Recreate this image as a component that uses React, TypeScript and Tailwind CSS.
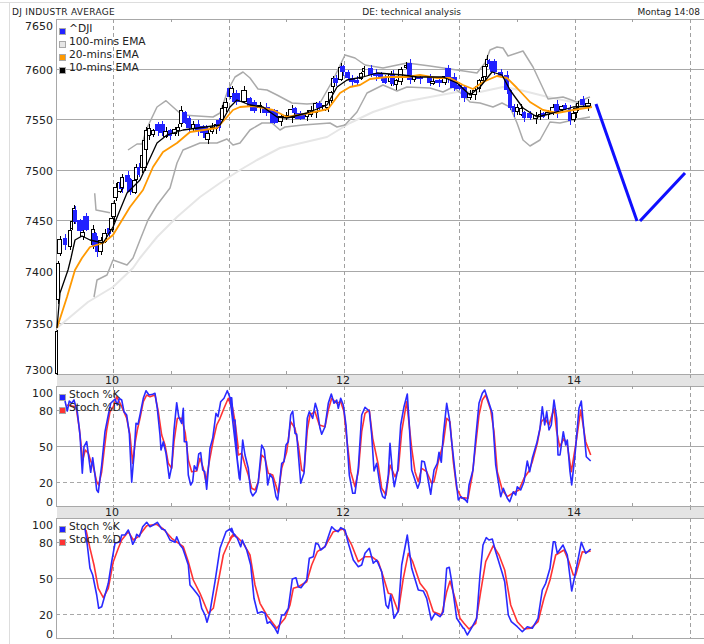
import React from 'react';

// traced from the chart at 3x, so every polyline carries its crop origin
const tr = (ox: number, oy: number, pts: string) =>
  pts
    .trim()
    .split(/\s+/)
    .map((p) => {
      const [x, y] = p.split(',').map(Number);
      return `${(ox + x / 3).toFixed(1)},${(oy + y / 3).toFixed(1)}`;
    })
    .join(' ');

const FONT = "'DejaVu Sans', 'Liberation Sans', sans-serif";

const MAJOR_X = [113.5, 229.5, 344.5, 459.5, 575.5, 690.5];
const MINOR_X = [171.5, 286.5, 402.5, 517.5, 632.5];

const upperBand =
  '94.7,193.3 96,210 110,212.7';
const upperBand2 =
  '128,150 137,144 142,144 147,128 157,107 166,100.7 173,107 182,115 213,117 220,113 228,90 235,77 243,72 250,78 258,89 267,90 277,95 292,103 307,104 320,103 333,80 345,55 355,58 365,65 383,68 407,63 430,66 457,70 477,73 485,63 490,50 497,47 503,48 508,56 523,51 533,67 548,99 563,97 577,102 590,97';
const lowerBand =
  '94,297 97,280 107,275 113,260 127,265 133,258 140,240 148,220 157,205 170,188 177,163 183,150 200,143 217,143 227,139 233,145 240,143 250,130 262,123 272,123 280,130 285,127 303,125 330,123 337,127 345,125 357,112 367,93 383,85 397,91 407,87 430,88 443,92 453,87 463,95 470,102 480,103 493,107 502,103 510,107 517,123 523,140 530,146 540,140 550,122 560,123 573,120 590,117';
const ema100 =
  '57,328 88,302 113,287 133,268 140,258 157,237 177,217 200,197 220,183 240,170 257,160 280,148 327,137 350,123 373,112 403,102 430,97 457,92 480,92 503,87 520,90 548,97 577,103 592,106';
const ema20 =
  '57,328 67,297 75,270 82,258 90,247 103,243 113,235 130,207 143,190 153,167 163,152 177,143 190,132 217,128 227,117 233,110 240,107 253,106 273,110 287,117 310,113 328,109 340,93 350,87 360,85 370,79 387,77 407,77 420,75 437,78 450,78 463,85 473,89 483,82 497,76 507,78 517,88 530,102 543,110 557,113 573,110 592,107';
const ema10 =
  '57,328 60,293 68,270 71,258 75,240 82,236 90,240 103,243 113,227 127,193 140,180 157,143 167,135 183,130 220,125 230,107 237,100 250,105 263,107 277,117 287,118 307,113 327,105 337,87 347,80 363,77 377,73 403,75 417,77 443,77 457,83 470,95 480,87 492,72 502,75 510,90 523,108 537,117 553,113 573,107 590,106';

// x1, x2, top, bottom, blue?
const candles: [number, number, number, number, number][] = [
  [55, 58, 331, 374, 0], [56, 60, 263, 300, 0], [57, 62, 239, 254, 0], [63, 67, 238, 245, 1],
  [68, 72, 230, 247, 0], [70, 73, 221, 229, 0], [72, 76, 208, 220, 0], [73, 77, 210, 222, 1],
  [77, 83, 220, 231, 1], [80, 85, 232, 237, 0], [83, 89, 216, 230, 1], [91, 95, 229, 245, 0],
  [92, 97, 233, 247, 1], [95, 98, 238, 252, 1], [98, 103, 240, 252, 0], [102, 107, 233, 242, 0],
  [107, 111, 228, 234, 1], [109, 114, 218, 230, 0], [111, 116, 203, 217, 0], [113, 118, 187, 198, 0],
  [117, 122, 182, 192, 0], [119, 124, 182, 189, 1], [120, 124, 177, 188, 0], [125, 130, 175, 182, 1],
  [127, 132, 179, 192, 1], [132, 137, 180, 193, 0], [134, 138, 167, 180, 0], [137, 140, 167, 175, 1],
  [140, 144, 155, 168, 0], [142, 147, 140, 168, 0], [144, 148, 130, 150, 0], [147, 151, 128, 136, 0],
  [151, 155, 130, 135, 0], [155, 161, 124, 131, 1], [159, 165, 124, 133, 1], [163, 168, 131, 137, 0],
  [168, 172, 130, 136, 1], [172, 177, 129, 134, 0], [176, 180, 127, 131, 0], [179, 183, 110, 124, 0],
  [182, 187, 112, 123, 1], [186, 191, 118, 128, 1], [191, 195, 124, 129, 0], [195, 200, 124, 131, 1],
  [200, 205, 126, 133, 1], [203, 208, 127, 138, 1], [205, 210, 133, 140, 0], [210, 214, 127, 132, 0],
  [214, 218, 124, 129, 0], [216, 221, 120, 128, 1], [220, 224, 108, 120, 0], [223, 228, 102, 108, 0],
  [227, 232, 88, 97, 1], [229, 234, 88, 97, 0], [232, 240, 93, 102, 1], [241, 247, 90, 102, 0],
  [247, 252, 98, 107, 1], [250, 257, 102, 111, 1], [257, 262, 105, 108, 0], [262, 270, 107, 113, 1],
  [270, 278, 110, 123, 1], [278, 283, 116, 122, 0], [283, 288, 115, 118, 0], [288, 295, 109, 118, 0],
  [292, 297, 108, 113, 1], [295, 305, 113, 119, 1], [305, 309, 113, 117, 0], [308, 313, 110, 115, 0],
  [313, 318, 103, 113, 0], [316, 322, 103, 108, 1], [322, 327, 105, 110, 0], [325, 330, 101, 108, 0],
  [328, 333, 92, 101, 0], [331, 335, 78, 87, 0], [333, 338, 78, 83, 1], [338, 343, 67, 80, 0],
  [340, 345, 66, 72, 1], [345, 350, 72, 78, 1], [349, 355, 78, 82, 1], [354, 359, 80, 83, 1],
  [359, 363, 73, 79, 0], [362, 365, 68, 72, 0], [368, 373, 68, 75, 1], [373, 378, 73, 76, 1],
  [378, 383, 73, 78, 1], [382, 387, 77, 83, 1], [388, 393, 74, 82, 0], [390, 395, 74, 84, 1],
  [394, 398, 80, 85, 0], [398, 403, 69, 82, 0], [404, 407, 65, 68, 0], [407, 412, 63, 80, 1],
  [412, 416, 76, 80, 0], [416, 423, 77, 79, 1], [427, 432, 77, 83, 1], [430, 435, 81, 84, 0],
  [435, 442, 80, 83, 1], [442, 447, 76, 83, 0], [445, 451, 68, 78, 1], [450, 457, 77, 88, 1],
  [455, 462, 85, 89, 1], [461, 467, 87, 98, 1], [467, 472, 93, 98, 0], [472, 477, 90, 95, 0],
  [477, 481, 80, 89, 0], [481, 484, 77, 81, 0], [482, 487, 66, 77, 0], [485, 488, 59, 65, 0],
  [487, 490, 60, 64, 1], [490, 497, 61, 72, 1], [498, 503, 72, 76, 1], [504, 509, 75, 90, 1],
  [508, 512, 90, 108, 1], [512, 515, 106, 112, 1], [515, 519, 107, 112, 0], [519, 523, 108, 115, 0],
  [522, 526, 112, 118, 1], [527, 532, 113, 118, 1], [533, 538, 115, 119, 0], [538, 541, 114, 117, 0],
  [541, 545, 113, 117, 1], [545, 550, 112, 115, 0], [550, 555, 107, 113, 0], [554, 559, 104, 113, 1],
  [559, 564, 106, 110, 0], [563, 567, 105, 109, 1], [568, 571, 108, 121, 1], [571, 576, 113, 120, 0],
  [573, 578, 108, 113, 0], [576, 579, 103, 108, 0], [580, 585, 99, 105, 1], [585, 591, 103, 107, 0],
];

function Candles() {
  return (
    <g shapeRendering="crispEdges">
      {candles.map(([x1, x2, top, bottom, blue], i) => {
        const mid = Math.round((x1 + x2) / 2) + 0.5;
        const up = 1 + (i % 4);
        const down = 1 + ((i * 3) % 5);
        const color = blue ? '#2222ff' : '#000000';
        return (
          <g key={i}>
            <line x1={mid} x2={mid} y1={top - up} y2={bottom + down} stroke={color} strokeWidth={1} />
            {blue ? (
              <rect x={x1} y={top} width={x2 - x1} height={bottom - top} fill="#2222ff" />
            ) : (
              <rect
                x={x1 + 0.5}
                y={top + 0.5}
                width={x2 - x1 - 1}
                height={bottom - top - 1}
                fill="#ffffff"
                stroke="#000000"
                strokeWidth={1}
              />
            )}
          </g>
        );
      })}
    </g>
  );
}

function Line({ pts, color, width = 1.5 }: { pts: string; color: string; width?: number }) {
  return <polyline points={pts} fill="none" stroke={color} strokeWidth={width} strokeLinejoin="round" />;
}

function YLabel({ y, children }: { y: number; children: React.ReactNode }) {
  return (
    <text x={53} y={y} textAnchor="end" fontSize={11} fontFamily={FONT} fill="#222222">
      {children}
    </text>
  );
}

// grid common to all three panels
function Grid({
  top,
  bottom,
  solid,
  dashed = [],
}: {
  top: number;
  bottom: number;
  solid: number[];
  dashed?: number[];
}) {
  return (
    <g shapeRendering="crispEdges">
      <line x1={56} x2={704} y1={top + 0.5} y2={top + 0.5} stroke="#a8a8a8" />
      <line x1={56} x2={704} y1={bottom + 0.5} y2={bottom + 0.5} stroke="#a8a8a8" />
      <line x1={56.5} x2={56.5} y1={top} y2={bottom} stroke="#a8a8a8" />
      {solid.map((y) => (
        <line key={y} x1={56} x2={704} y1={y + 0.5} y2={y + 0.5} stroke="#a8a8a8" />
      ))}
      {dashed.map((y) => (
        <line key={y} x1={56} x2={704} y1={y + 0.5} y2={y + 0.5} stroke="#a8a8a8" strokeDasharray="4 3" />
      ))}
      {MAJOR_X.map((x) => (
        <line key={x} x1={x} x2={x} y1={top} y2={bottom} stroke="#a0a0a0" strokeDasharray="4 3" />
      ))}
      {MINOR_X.map((x) => (
        <g key={x}>
          <line x1={x} x2={x} y1={top} y2={top + 3} stroke="#a0a0a0" />
          <line x1={x} x2={x} y1={bottom - 3} y2={bottom} stroke="#a0a0a0" />
        </g>
      ))}
    </g>
  );
}

// hour strip between two panels
function HourBand() {
  return (
    <div className="relative ml-[47px] flex h-[11px] gap-[121px] bg-[#e4e4e4] text-[11px] leading-[12px] text-[#222222]">
      {MAJOR_X.map((x) => (
        <span
          key={x}
          className="absolute top-0 h-[3px] w-px bg-[#a0a0a0]"
          style={{ left: x - 57.5 }}
        />
      ))}
      <span className="relative w-[110px] text-center">10</span>
      <span className="relative w-[110px] text-center">12</span>
      <span className="relative w-[110px] text-center">14</span>
    </div>
  );
}

function Legend({ items, className }: { items: [string, string][]; className: string }) {
  return (
    <div className={`absolute flex flex-col ${className}`}>
      {items.map(([label, color]) => (
        <div key={label} className="flex h-[13px] items-center gap-[3px]">
          <span
            className="mt-[6px] h-[7px] w-[7px] border border-[#a8a8a8]"
            style={{ backgroundColor: color }}
          />
          <span className="text-[10.7px] leading-[13px] text-[#222222] whitespace-nowrap">{label}</span>
        </div>
      ))}
    </div>
  );
}

function MainPanel() {
  return (
    <div className="relative">
      <svg width={694} height={356} viewBox="10 19 694 356" className="block overflow-visible">
        <Grid top={19} bottom={374} solid={[69, 119, 170, 220, 271, 323]} />
        <Line pts={ema100} color="#e6e6e6" width={2} />
        <Line pts={upperBand} color="#aaaaaa" />
        <Line pts={upperBand2} color="#aaaaaa" />
        <Line pts={lowerBand} color="#aaaaaa" />
        <Candles />
        <Line pts={ema20} color="#ff9900" width={1.8} />
        <Line pts={ema10} color="#000000" width={1.3} />
        <line x1={596} y1={104} x2={637} y2={221} stroke="#0f0fff" strokeWidth={3} />
        <line x1={640} y1={221} x2={685} y2={173} stroke="#0f0fff" strokeWidth={3} />
        <YLabel y={30}>7650</YLabel>
        <YLabel y={74}>7600</YLabel>
        <YLabel y={124}>7550</YLabel>
        <YLabel y={175}>7500</YLabel>
        <YLabel y={225}>7450</YLabel>
        <YLabel y={276}>7400</YLabel>
        <YLabel y={328}>7350</YLabel>
        <YLabel y={374}>7300</YLabel>
      </svg>
      <Legend
        className="left-[49px] top-[3px]"
        items={[
          ['^DJI', '#2222ff'],
          ['100-mins EMA', '#e6e6e6'],
          ['20-mins EMA', '#ff9900'],
          ['10-mins EMA', '#000000'],
        ]}
      />
    </div>
  );
}

const k1 = [
  tr(0, 375, '195,78 202,108 208,78 215,85 222,75 232,110 240,180 247,295 252,215 260,200 268,260 272,292 278,248 285,300 290,345 295,352 305,270 315,170 325,120 332,85 345,72 352,90 358,70 365,75 372,110 380,120 388,175 395,322 402,240 408,145 414,148 420,120 430,70 438,47 447,60 458,58 465,55 472,100 480,180 483,225 490,200 498,235 508,310 515,275 522,165 530,83 536,125 545,145 550,100 553,200 560,200 565,300 572,330 578,320 583,272 590,285 596,237 602,233 608,285 614,290 620,343 630,220 638,190 648,115 654,125 662,80 672,70 682,47 690,68 700,135 705,135 712,255 718,310'),
  tr(230, 375, '0,68 5,68 10,135 15,138 20,240 30,315 38,195 45,240 55,280 62,350 68,363 78,350 85,320 95,210 103,225 110,290 113,330 120,298 128,310 138,365 143,375 155,265 162,260 168,210 175,200 182,120 188,108 195,175 200,178 212,325 222,295 232,130 238,110 248,130 256,85 262,105 270,160 275,178 285,155 295,85 304,57 312,85 320,75 325,100 332,70 340,90 348,150 358,300 368,355 375,355 385,280 395,120 405,97 418,108 425,180 432,288 440,265 452,345 458,365 465,370 475,300 480,205 488,300 493,335 503,285 512,150 522,95 532,57 538,150 545,285 555,315 563,340 570,320 575,258 583,260 592,300 602,358 612,285 622,265 627,232 634,262 640,180 650,85 658,130 665,200 675,290 685,375 692,365 702,372 712,380'),
  tr(464, 375, '0,370 10,382 15,330 27,285 35,190 45,85 55,55 62,45 72,75 85,115 95,270 110,365 118,340 130,370 137,380 148,350 155,360 160,335 170,345 180,320 190,258 197,290 205,250 218,205 228,160 235,95 242,150 248,110 255,165 262,150 270,75 278,130 282,240 288,240 298,170 305,210 310,195 318,290 323,330 333,240 345,100 352,78 360,170 367,245 380,258'),
].join(' ');

const d1 = [
  tr(0, 375, '200,90 228,95 238,160 248,255 256,225 265,235 272,258 280,275 290,320 296,330 305,290 312,230 320,165 330,110 340,95 350,65 365,95 380,130 390,180 398,265 405,205 412,165 420,130 430,80 440,60 450,65 465,60 475,110 485,180 495,210 505,265 515,280 522,200 532,130 545,130 556,175 565,255 575,290 590,288 600,250 610,280 618,320 628,260 640,195 650,150 660,130 672,100 685,70 695,100 705,140 715,220'),
  tr(230, 375, '0,70 8,100 15,140 25,240 35,235 45,270 55,300 65,340 75,345 85,320 95,240 105,250 115,295 128,300 145,355 155,280 170,230 182,140 195,160 205,210 215,285 222,290 232,165 240,120 255,110 268,150 285,155 295,105 305,70 320,85 332,80 342,110 350,190 362,290 375,335 385,290 395,170 405,115 418,105 428,190 445,270 455,340 468,360 480,270 495,305 505,285 515,170 530,80 545,220 555,290 565,320 575,280 590,290 605,325 612,320 625,260 640,205 650,130 660,140 670,260 680,340 695,370'),
  tr(464, 375, '0,368 12,370 25,300 35,210 45,120 55,75 65,60 80,105 90,170 100,290 115,345 130,365 145,355 165,345 180,310 195,288 205,260 220,205 232,140 242,130 255,150 270,100 278,170 287,215 300,190 310,210 322,290 335,210 350,105 365,200 380,240'),
].join(' ');

const k2 = [
  tr(0, 505, '255,70 262,120 270,190 278,210 290,270 296,310 305,305 315,270 325,235 335,170 345,115 360,110 365,90 375,90 385,75 392,95 398,118 405,105 410,88 418,95 428,65 440,52 450,65 460,60 472,52 485,72 495,75 510,105 525,112 530,95 540,120 548,130 555,150 565,180 570,240 578,250 590,265 598,275 605,310 615,330 621,352 630,320 645,230 660,130 678,80 690,72 705,90'),
  tr(230, 505, '0,75 5,70 12,90 22,100 32,125 37,105 50,135 62,180 72,280 83,325 95,320 105,325 112,355 120,350 135,370 143,385 155,330 163,330 175,310 187,222 198,218 205,245 213,248 230,225 238,160 250,155 257,115 265,118 272,135 285,125 295,95 305,65 315,75 325,80 332,68 345,75 355,115 370,165 385,185 395,180 405,145 418,130 430,175 440,165 455,200 468,300 475,310 482,270 492,340 505,318 515,180 532,90 545,190 565,255 580,258 590,280 604,345 615,325 630,335 640,320 650,190 658,187 665,230 680,340 700,370'),
  tr(464, 505, '0,370 10,390 25,365 38,340 48,210 57,120 67,98 75,105 85,102 95,140 115,205 122,230 133,330 142,350 160,365 175,380 190,365 205,370 222,340 235,255 245,235 258,190 268,110 273,110 280,145 297,120 310,150 323,258 335,200 352,112 365,145 380,132'),
].join(' ');

const d2 = [
  tr(0, 505, '258,75 270,130 282,180 295,250 310,278 325,250 340,170 355,130 365,105 385,80 400,105 415,95 440,62 470,58 490,72 515,100 550,125 565,170 580,225 600,265 625,325 640,310 655,230 670,150 685,115 700,88'),
  tr(230, 505, '0,100 15,90 40,115 60,150 75,240 90,295 110,330 140,370 165,340 180,300 190,250 205,245 230,230 245,180 262,140 285,125 310,80 340,72 365,120 385,170 405,155 425,155 445,170 460,215 475,265 485,268 505,320 520,220 535,145 548,170 570,235 590,260 610,320 635,330 650,260 660,228 675,280 690,340'),
  tr(464, 505, '0,355 15,372 35,355 50,260 65,170 88,122 105,150 122,195 140,300 160,350 180,372 200,370 222,350 240,280 258,225 275,150 300,135 315,170 328,210 335,210 355,140 365,142 380,138'),
].join(' ');

const STOCH_LEGEND: [string, string][] = [
  ['Stoch %K', '#2222ff'],
  ['Stoch %D', '#ff3333'],
];

function StochPanel({ top, k, d }: { top: number; k: string; d: string }) {
  const bottom = top + 120;
  return (
    <div className="relative">
      <svg width={694} height={121} viewBox={`10 ${top} 694 121`} className="block overflow-visible">
        <Grid top={top} bottom={bottom} solid={[top + 60]} dashed={[top + 24, top + 96]} />
        <Line pts={d} color="#ff3333" width={1.6} />
        <Line pts={k} color="#2a2aff" width={1.6} />
        <YLabel y={top + 11}>100</YLabel>
        <YLabel y={top + 29}>80</YLabel>
        <YLabel y={top + 65}>50</YLabel>
        <YLabel y={top + 101}>20</YLabel>
        <YLabel y={top + 120}>0</YLabel>
      </svg>
      <Legend className="left-[49px] top-[2px]" items={STOCH_LEGEND} />
    </div>
  );
}

export default function App() {
  return (
    <div
      className="h-[644px] w-[704px] overflow-hidden bg-white pt-[2px]"
      style={{ fontFamily: FONT }}
    >
      <div className="h-px bg-[#dddddd]" />
      <div className="ml-[9px] h-[641px] border-l border-[#dddddd]">
        <div className="grid h-[16px] grid-cols-3 items-end pb-[1px] text-[9px] leading-[12px] text-[#222222]">
          <span className="pl-[2px] tracking-[0.3px] whitespace-nowrap">DJ INDUSTR AVERAGE</span>
          <span className="pl-[121px] whitespace-nowrap">DE: technical analysis</span>
          <span className="pr-[4px] text-right whitespace-nowrap">Montag 14:08</span>
        </div>
        <MainPanel />
        <HourBand />
        <StochPanel top={386} k={k1} d={d1} />
        <HourBand />
        <StochPanel top={518} k={k2} d={d2} />
      </div>
    </div>
  );
}
